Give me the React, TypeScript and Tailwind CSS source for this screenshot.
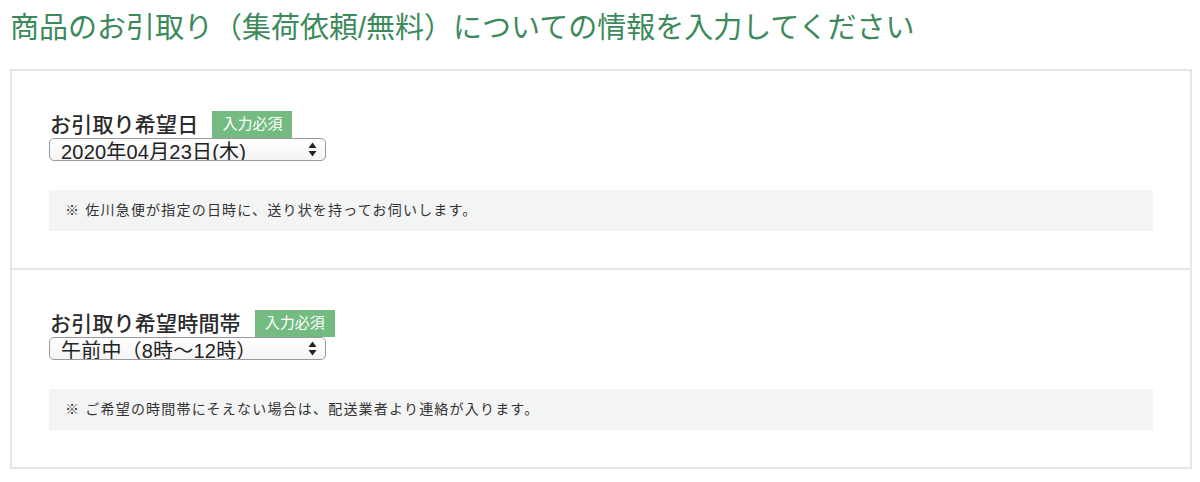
const jp = "font-['Liberation_Sans','Noto_Sans_CJK_JP',sans-serif]";

function Arrows() {
  return (
    <svg width="9" height="15" viewBox="0 0 9 15" className="shrink-0">
      <path d="M4.5 0.5 L8.5 6 L0.5 6 Z" fill="#222" />
      <path d="M0.5 9 L8.5 9 L4.5 14.5 Z" fill="#222" />
    </svg>
  );
}

function FakeSelect({ value }: { value: string }) {
  return (
    <div className="flex h-[23px] w-[277px] items-start justify-between overflow-hidden rounded-[5px] border border-[#9a9a9a] bg-gradient-to-b from-white to-[#f4f4f4] pl-[11px] pr-[8px]">
      <span className="text-[20px] leading-[27px] tracking-[0.2px] text-[#222]">{value}</span>
      <span className="mt-[3px]">
        <Arrows />
      </span>
    </div>
  );
}

interface FieldProps {
  label: string;
  value: string;
  note: string;
  last?: boolean;
}

function Field({ label, value, note, last }: FieldProps) {
  return (
    <div
      className={
        "px-[37px] pt-[39px] pb-[37px] " +
        (last ? "" : "border-b-2 border-[#e6e6e6]")
      }
    >
      <div className="flex h-[28px] items-center">
        <h3 className="ml-[1px] text-[21px] font-medium leading-none tracking-[0.2px] text-[#2b2b2b]">{label}</h3>
        <span className="ml-[14px] flex h-[27px] w-[80px] items-center justify-center bg-[#74bb81] text-[15px] text-white">
          入力必須
        </span>
      </div>
      <FakeSelect value={value} />
      <div className="mt-[29px] flex h-[41px] items-center bg-[#f3f4f4] pl-[16px] text-[14px] tracking-[1.2px] text-[#333]">
        {note}
      </div>
    </div>
  );
}

export default function App() {
  return (
    <div className={`${jp} min-h-[482px] bg-white`}>
      <h1 className="flex h-[56px] items-center pl-[10px] pt-[1px] text-[29px] font-normal leading-none text-[#3c8a5b]">
        商品のお引取り（集荷依頼/無料）についての情報を入力してください
      </h1>
      <div className="ml-[10px] mr-[8px] mt-[13px] border-2 border-[#e6e6e6]">
        <Field
          label="お引取り希望日"
          value="2020年04月23日(木)"
          note="※ 佐川急便が指定の日時に、送り状を持ってお伺いします。"
        />
        <Field
          label="お引取り希望時間帯"
          value="午前中（8時〜12時）"
          note="※ ご希望の時間帯にそえない場合は、配送業者より連絡が入ります。"
          last
        />
      </div>
    </div>
  );
}
